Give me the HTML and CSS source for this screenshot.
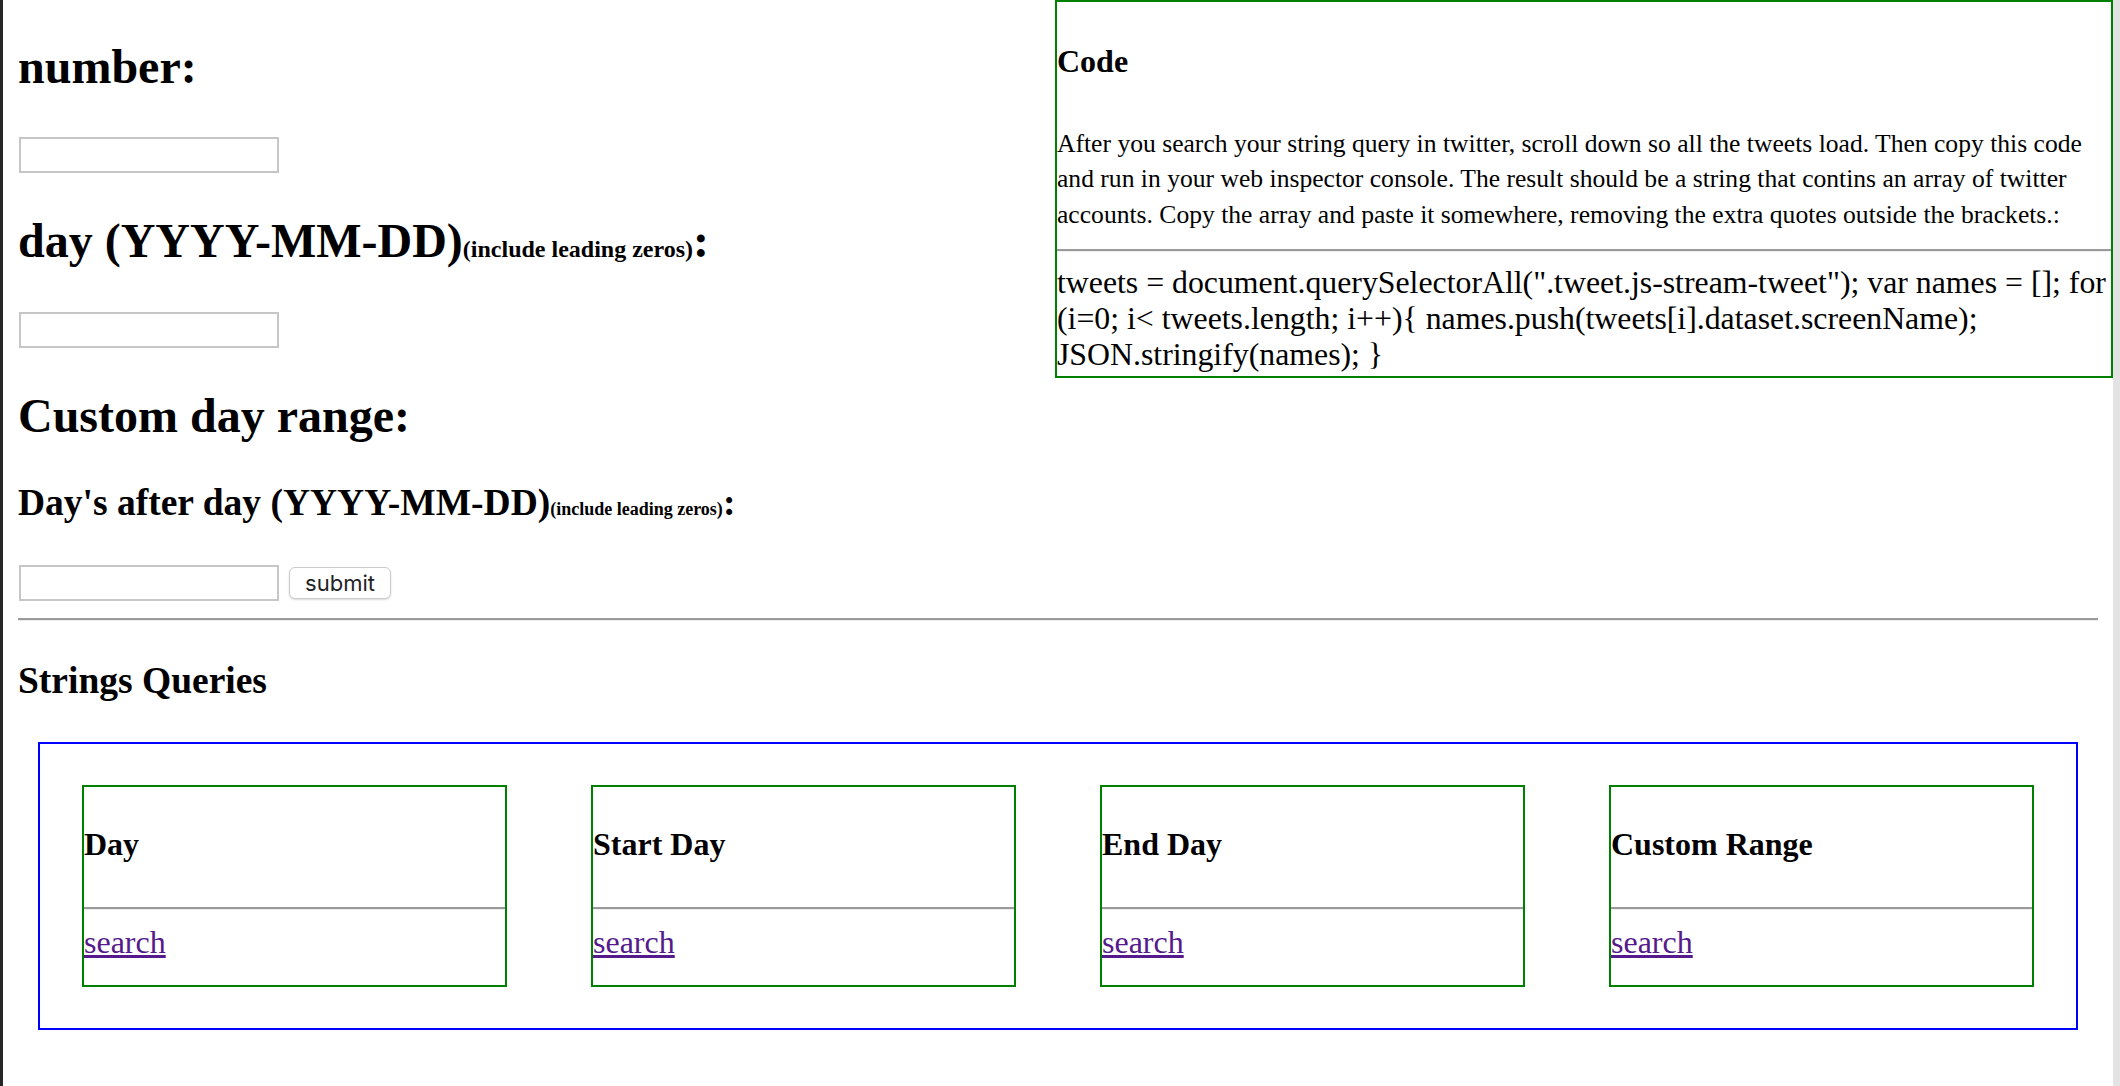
FILE: index.html
```html
<!DOCTYPE html>
<html lang="en">
<head>
<meta charset="utf-8">
<title>Twitter queries</title>
<link rel="stylesheet" href="styles.css">
</head>
<body>
  <form class="form">
    <h1 class="title title-number">number:</h1>
    <input class="field field-1" type="text">
    <h1 class="title title-day">day (YYYY-MM-DD)<span class="note">(include leading zeros)</span>:</h1>
    <input class="field field-2" type="text">
    <h1 class="title title-custom">Custom day range:</h1>
    <h2 class="subtitle subtitle-after">Day's after day (YYYY-MM-DD)<span class="note note-small">(include leading zeros)</span>:</h2>
    <div class="submit-row">
      <input class="field" type="text">
      <button class="submit" type="button">submit</button>
    </div>
  </form>
  <hr class="rule page-rule">
  <h2 class="subtitle subtitle-strings">Strings Queries</h2>
  <div class="queries">
    <div class="card">
      <h3 class="card-title">Day</h3>
      <hr class="rule card-rule">
      <a class="card-link" href="#">search</a>
    </div>
    <div class="card">
      <h3 class="card-title">Start Day</h3>
      <hr class="rule card-rule">
      <a class="card-link" href="#">search</a>
    </div>
    <div class="card">
      <h3 class="card-title">End Day</h3>
      <hr class="rule card-rule">
      <a class="card-link" href="#">search</a>
    </div>
    <div class="card">
      <h3 class="card-title">Custom Range</h3>
      <hr class="rule card-rule">
      <a class="card-link" href="#">search</a>
    </div>
  </div>

  <div class="code-panel">
    <h3 class="code-title">Code</h3>
    <p class="code-desc">After you search your string query in twitter, scroll down so all the tweets load. Then copy this code<br>and run in your web inspector console. The result should be a string that contins an array of twitter<br>accounts. Copy the array and paste it somewhere, removing the extra quotes outside the brackets.:</p>
    <hr class="rule code-rule">
    <div class="code-body">tweets = document.querySelectorAll(".tweet.js-stream-tweet"); var names = []; for (i=0; i&lt; tweets.length; i++){ names.push(tweets[i].dataset.screenName); JSON.stringify(names); }</div>
  </div>
</body>
</html>
```

FILE: styles.css
```css
html {
  background: #fff;
}

body {
  margin: 0;
  padding: 0 15px;
  border-left: 3px solid #262626;
  border-right: 7px solid #e3e3e3;
  min-height: 1086px;
  box-sizing: border-box;
  display: flow-root;
  font-family: "Liberation Serif", "Times New Roman", serif;
  color: #000;
}

.form {
  margin: 0;
}

.title {
  font-size: 48px;
  line-height: 56px;
  font-weight: bold;
  margin: 0;
  white-space: nowrap;
}

.subtitle {
  font-size: 37.5px;
  line-height: 42px;
  font-weight: bold;
  margin: 0;
  white-space: nowrap;
}

.note {
  font-size: 24px;
  line-height: 1;
}

.note-small {
  font-size: 18px;
}

.title-number { margin-top: 39px; }
.title-day { margin-top: 40px; }
.title-custom { margin-top: 40px; }
.subtitle-after { margin-top: 38px; }
.subtitle-strings { margin-top: 39px; }

.field {
  display: block;
  box-sizing: border-box;
  width: 260px;
  height: 36px;
  margin: 0 0 0 1px;
  padding: 0 4px;
  border: 2px solid #c6c6c6;
  background: #fff;
  font-size: 20px;
}

.field-1 { margin-top: 42px; }
.field-2 { margin-top: 43px; }

.submit-row {
  display: flex;
  align-items: center;
  gap: 10px;
  margin-top: 41px;
}

.submit {
  box-sizing: border-box;
  width: 102px;
  height: 32px;
  padding: 0;
  font-family: Inter, "Liberation Sans", sans-serif;
  font-size: 22px;
  color: #222;
  background: #fff;
  border: 1px solid #cbcbcb;
  border-radius: 6px;
  box-shadow: 0 1px 2px rgba(0, 0, 0, 0.15);
}

.rule {
  height: 0;
  border: 0;
  border-top: 2px solid #9a9a9a;
  border-bottom: 1px solid #ececec;
  margin: 0;
}

.page-rule {
  margin-top: 17px;
}

.queries {
  margin: 40px 20px 0;
  border: 2px solid #0000ff;
  padding: 41px 0;
  display: flex;
  justify-content: space-around;
}

.card {
  width: 425px;
  height: 202px;
  box-sizing: border-box;
  border: 2px solid #008000;
}

.card-title {
  font-size: 32px;
  line-height: 37px;
  font-weight: bold;
  margin: 39px 0 0;
}

.card-rule {
  margin-top: 44px;
}

.card-link {
  display: block;
  width: max-content;
  margin-top: 14px;
  font-size: 32px;
  line-height: 37px;
  color: #551a8b;
}

.code-panel {
  position: absolute;
  top: 0;
  right: 7px;
  width: 1058px;
  height: 378px;
  box-sizing: border-box;
  border: 2px solid #008000;
  background: #fff;
}

.code-title {
  font-size: 32px;
  line-height: 37px;
  font-weight: bold;
  margin: 41px 0 0;
}

.code-desc {
  font-size: 25.6px;
  line-height: 35.5px;
  margin: 45.5px 0 0;
  white-space: nowrap;
}

.code-rule {
  margin-top: 17px;
}

.code-body {
  font-size: 31.8px;
  line-height: 36px;
  margin-top: 13px;
}
```
